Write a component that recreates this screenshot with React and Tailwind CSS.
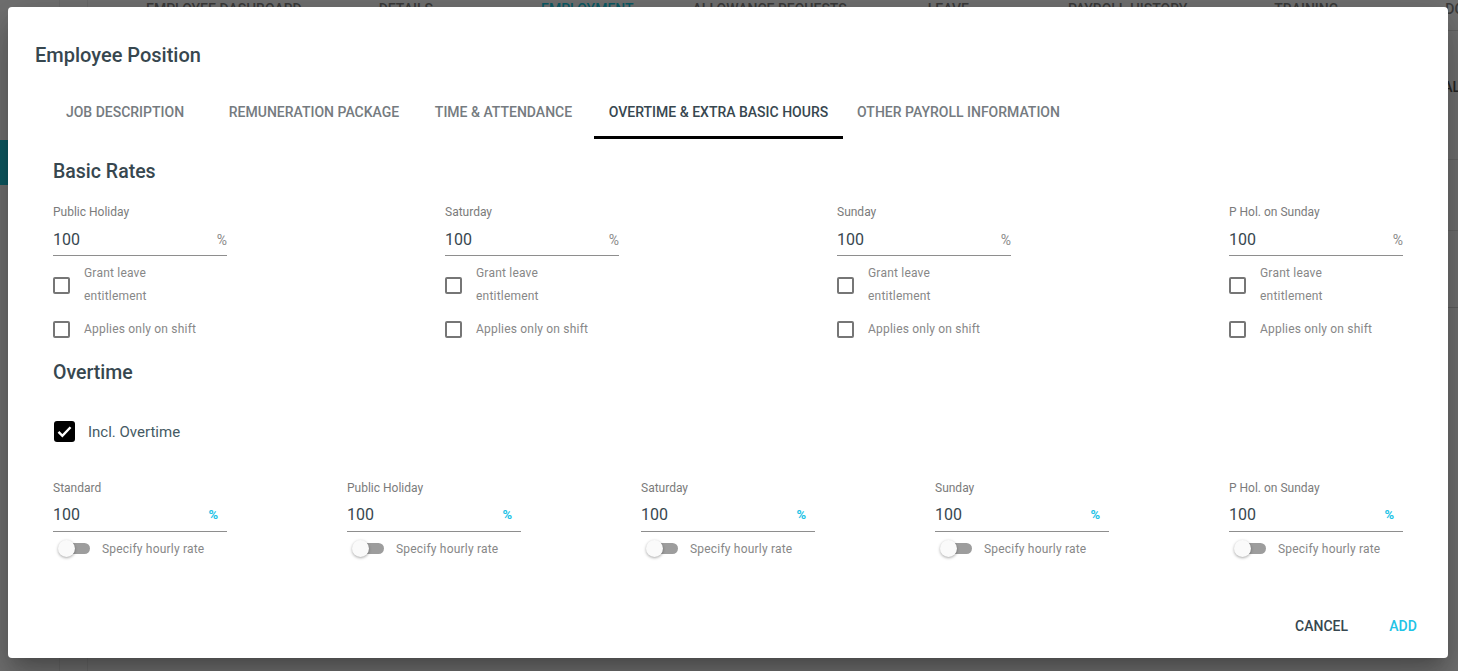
import React from "react";

function Checkbox({ checked = false }) {
  if (checked) {
    return (
      <div className="w-[21px] h-[21px] rounded-[3px] bg-black flex items-center justify-center shrink-0">
        <svg width="17" height="17" viewBox="0 0 24 24">
          <path d="M3.5 12.5l5.5 5.5L20.5 6" fill="none" stroke="white" strokeWidth="3.4" />
        </svg>
      </div>
    );
  }
  return <div className="w-[17px] h-[17px] rounded-[2px] border-2 border-[#767676] shrink-0" />;
}

function BasicField({ label }) {
  return (
    <div className="w-[174px]">
      <div className="text-[12px] leading-[16px] text-[#7b7b7b]">{label}</div>
      <div className="mt-[10px] flex items-center justify-between border-b border-[#8e8e8e] pb-[5px]">
        <span className="text-[16px] leading-[20px] text-[#37474f]">100</span>
        <span className="text-[14px] leading-[20px] text-[#8a8a8a]">%</span>
      </div>
      <div className="mt-[6px] flex items-center">
        <Checkbox />
        <div className="ml-[14px] w-[118px] text-[12px] leading-[23px] tracking-[0.2px] text-[#878787]">Grant leave entitlement</div>
      </div>
      <div className="mt-[10px] flex items-center">
        <Checkbox />
        <div className="ml-[14px] text-[12px] leading-[23px] tracking-[0.2px] text-[#878787] whitespace-nowrap">Applies only on shift</div>
      </div>
    </div>
  );
}

function OvertimeField({ label }) {
  return (
    <div className="w-[174px]">
      <div className="text-[12px] leading-[16px] text-[#7b7b7b]">{label}</div>
      <div className="mt-[9px] flex items-center justify-between border-b border-[#8e8e8e] pb-[6px]">
        <span className="text-[16px] leading-[20px] text-[#37474f]">100</span>
        <span className="mr-[9px] text-[13px] leading-[20px] font-bold text-[#22c3e6]">%</span>
      </div>
      <div className="mt-[8px] flex items-center">
        <div className="relative ml-[5px] w-[32px] h-[17px]">
          <div className="absolute left-[4px] right-0 top-[3px] h-[11px] rounded-full bg-[#9d9d9d]" />
          <div className="absolute left-0 top-0 w-[17px] h-[17px] rounded-full bg-[#fafafa] shadow-[0_1px_3px_rgba(0,0,0,0.35)]" />
        </div>
        <div className="ml-[12px] text-[12px] leading-[16px] tracking-[0.2px] text-[#878787] whitespace-nowrap">Specify hourly rate</div>
      </div>
    </div>
  );
}

const tabs = [
  { label: "JOB DESCRIPTION", w: "w-[180px]" },
  { label: "REMUNERATION PACKAGE", w: "w-[198px]" },
  { label: "TIME & ATTENDANCE", w: "w-[181px]" },
  { label: "OVERTIME & EXTRA BASIC HOURS", w: "w-[249px]", active: true },
  { label: "OTHER PAYROLL INFORMATION", w: "w-[231px]" },
];

function BackgroundPage() {
  return (
    <div className="w-full h-full bg-[#717171] flex">
      <div className="w-[60px] shrink-0 h-full flex flex-col border-r border-[#6a6a6a]">
        <div className="h-[140px]" />
        <div className="w-[8px] h-[45px] bg-[#0d5a63]" />
      </div>
      <div className="w-[28px] shrink-0 h-full border-r border-[#6a6a6a]" />
      <div className="flex-1 min-w-0 overflow-hidden flex flex-col">
        <div className="h-[30px] flex items-start pt-[1px] text-[14px] leading-[16px] font-medium text-[#3a3a3a] whitespace-nowrap">
          <span className="ml-[58px]">EMPLOYEE DASHBOARD</span>
          <span className="ml-[77px]">DETAILS</span>
          <span className="ml-[108px] text-[#0b5b66]">EMPLOYMENT</span>
          <span className="ml-[59px]">ALLOWANCE REQUESTS</span>
          <span className="ml-[81px]">LEAVE</span>
          <span className="ml-[99px]">PAYROLL HISTORY</span>
          <span className="ml-[87px]">TRAINING</span>
          <span className="ml-[107px]">DO</span>
        </div>
        <div className="h-[1px] bg-[#636363]" />
        <div className="flex justify-end pt-[48px]">
          <span className="text-[14px] leading-[16px] font-medium text-[#262626] mr-[-2px]">AL</span>
        </div>
        <div className="mt-[64px] h-[1px] bg-[#666]" />
        <div className="mt-[70px] h-[1px] bg-[#666]" />
        <div className="mt-[76px] h-[1px] bg-[#5f5f5f]" />
      </div>
    </div>
  );
}

export default function App() {
  return (
    <div className="relative w-[1458px] h-[671px] overflow-hidden font-['Roboto',sans-serif]">
      <BackgroundPage />
      <div className="absolute left-[8px] top-[7px] w-[1440px] h-[651px] bg-white rounded-[4px] flex flex-col shadow-[0_11px_15px_-7px_rgba(0,0,0,0.2),0_24px_38px_3px_rgba(0,0,0,0.14),0_9px_46px_8px_rgba(0,0,0,0.12)]">
        <div className="pl-[27px] pt-[34px]">
          <div className="text-[20px] leading-[28px] font-medium text-[#37474f]">Employee Position</div>
          <div className="mt-[17px] flex">
            {tabs.map((t) => (
              <div key={t.label} className={`relative ${t.w} h-[53px] pt-[16px] text-center text-[14px] leading-[20px] font-medium whitespace-nowrap ${t.active ? "text-[#37474f]" : "text-[#757b80]"}`}>
                {t.label}
                {t.active && <div className="absolute left-0 right-0 bottom-0 h-[3px] bg-black" />}
              </div>
            ))}
          </div>
        </div>
        <div className="pl-[45px] pt-[21px]">
          <div className="text-[19.5px] leading-[24px] font-medium text-[#37474f]">Basic Rates</div>
          <div className="mt-[20px] grid grid-cols-[392px_392px_392px_174px]">
            <BasicField label="Public Holiday" />
            <BasicField label="Saturday" />
            <BasicField label="Sunday" />
            <BasicField label="P Hol. on Sunday" />
          </div>
          <div className="mt-[20px] text-[19.5px] leading-[24px] font-medium text-[#37474f]">Overtime</div>
          <div className="mt-[36px] ml-[1px] flex items-center">
            <Checkbox checked />
            <span className="ml-[13px] text-[15px] leading-[20px] text-[#455a64]">Incl. Overtime</span>
          </div>
          <div className="mt-[38px] grid grid-cols-[294px_294px_294px_294px_174px]">
            <OvertimeField label="Standard" />
            <OvertimeField label="Public Holiday" />
            <OvertimeField label="Saturday" />
            <OvertimeField label="Sunday" />
            <OvertimeField label="P Hol. on Sunday" />
          </div>
        </div>
        <div className="mt-auto flex justify-end gap-[15px] pr-[13px] pb-[14px]">
          <button className="h-[36px] min-w-[64px] px-[8px] text-[14px] font-medium text-[#37474f]">CANCEL</button>
          <button className="h-[36px] min-w-[64px] px-[8px] text-[14px] font-medium text-[#22c3e6]">ADD</button>
        </div>
      </div>
    </div>
  );
}
